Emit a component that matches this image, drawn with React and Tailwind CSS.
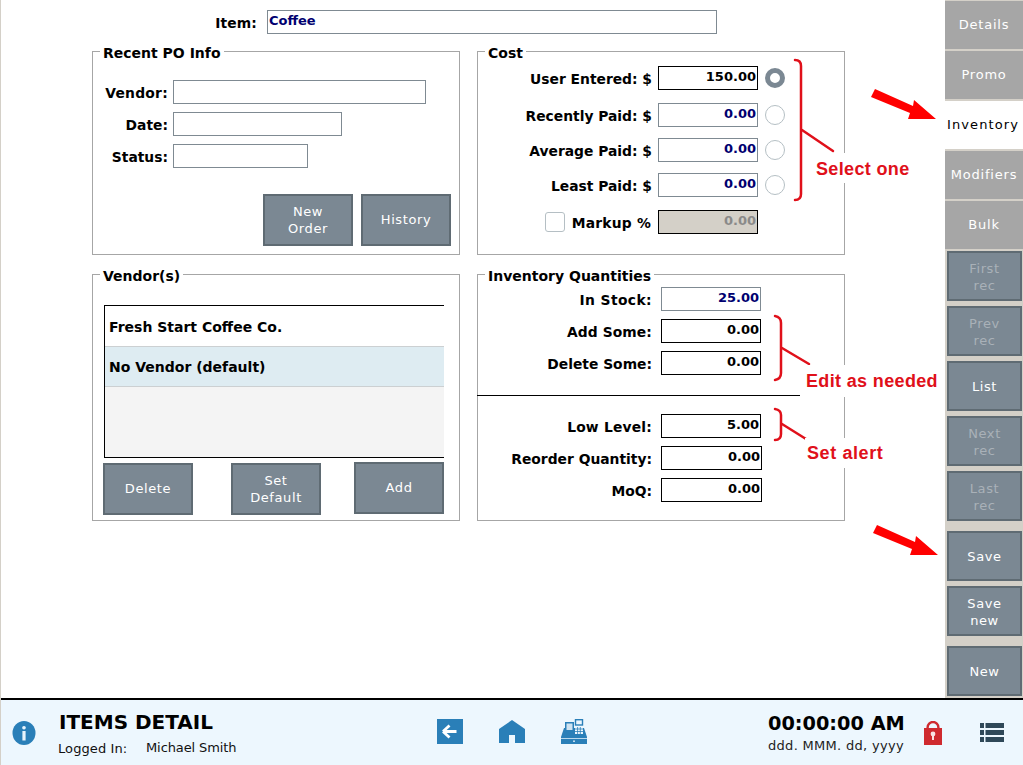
const FONT = "font-['DejaVu_Sans',Verdana,sans-serif]";

function GrayBtn({ children, className = "", dim = false, textClass = "" }) {
  return (
    <div
      className={`flex items-center justify-center text-center bg-[#7b8893] border-2 border-[#5f6b73] text-[13px] leading-[17px] tracking-[0.6px] ${dim ? "text-[#a9b1b8]" : "text-white"} ${className}`}
    >
      <span className={textClass}>{children}</span>
    </div>
  );
}

function Tab({ children, active }) {
  return (
    <div
      className={`h-[48px] mb-[2px] flex items-center justify-center text-[13px] ${active ? "bg-white text-black tracking-[1.1px] pr-[2px]" : "bg-[#a6a6a6] text-white tracking-[0.8px]"}`}
    >
      {children}
    </div>
  );
}

function Panel({ title, className = "", children }) {
  return (
    <div className={`border border-[#a6a6a6] ${className}`}>
      <div className="-mt-[7px] mb-[-9px] ml-[7px] h-[16px] w-fit bg-white px-[3px] text-[14px] leading-[16px] font-bold text-black">
        {title}
      </div>
      {children}
    </div>
  );
}

function Box({ value = "", w = "w-[100px]", navy, dark, disabled }) {
  const border = dark ? "border-black" : "border-[#7f8a92]";
  const color = disabled ? "text-[#8a8a8a] bg-[#d4d0c8]" : navy ? "text-[#000070] bg-white" : "text-black bg-white";
  return (
    <div className={`h-[24px] ${w} border ${border} ${color} text-right pr-[1px] text-[13px] leading-[20px] font-bold`}>
      {value}
    </div>
  );
}

function Radio({ on }) {
  return on ? (
    <div className="w-[20px] h-[20px] rounded-full border-[5px] border-[#7b8893] bg-white" />
  ) : (
    <div className="w-[20px] h-[20px] rounded-full border border-[#b5bfc4] bg-white" />
  );
}

const LABEL = "text-right text-[13.85px] leading-[20px] font-bold pt-[2px]";

function CostRow({ label, value, navy, dark, on, mt }) {
  return (
    <div className={`flex items-center ${mt}`}>
      <div className={`w-[174px] ${LABEL}`}>{label}</div>
      <div className="ml-[6px]"><Box value={value} navy={navy} dark={dark} /></div>
      <div className="ml-[7px]"><Radio on={on} /></div>
    </div>
  );
}

function QtyRow({ label, value, navy, dark, w, mt, ls = "" }) {
  return (
    <div className={`flex items-center ${mt}`}>
      <div className={`w-[174px] ${LABEL} ${ls}`}>{label}</div>
      <div className="ml-[9px]"><Box value={value} navy={navy} dark={dark} w={w} /></div>
    </div>
  );
}

function PoRow({ label, w, mt, ls = "" }) {
  return (
    <div className={`flex items-center ${mt}`}>
      <div className={`w-[75px] ${LABEL} ${ls}`}>{label}</div>
      <div className="ml-[5px]"><Box w={w} /></div>
    </div>
  );
}

function Annotations() {
  const red = "#e0101a";
  const note = "absolute bg-white px-[2px] text-[#e0101a] text-[18px] tracking-[0.35px] font-bold font-['Liberation_Sans',Arial,sans-serif]";
  return (
    <>
      <svg className="absolute left-0 top-0 pointer-events-none" width="1023" height="698" fill="none">
        <g stroke={red} strokeWidth="2.5" strokeLinecap="round">
          <path d="M794 60 q6 0 6 6 v128 q0 6 -6 6" />
          <path d="M801 130 L832 151" />
          <path d="M774 316 q6 1 6 7 v50 q0 6 -6 7" />
          <path d="M781 348 L808 364" />
          <path d="M774 409 q6 1 6 6 v19 q0 6 -6 6" />
          <path d="M781 424 L805 439" />
        </g>
        <polygon fill="#ff0000" points="870,97 874,89 912,106 913,100 935,119 907,119 909,113" />
        <polygon fill="#ff0000" points="872,533 876,525 914,542 915,536 937,555 909,555 911,549" />
      </svg>
      <div className={`${note} left-[813px] top-[153px] h-[30px] leading-[32px]`}>Select one</div>
      <div className={`${note} left-[803px] top-[365px] h-[32px] leading-[32px]`}>Edit as needed</div>
      <div className={`${note} left-[804px] top-[438px] h-[30px] leading-[30px] !tracking-[0.6px]`}>Set alert</div>
    </>
  );
}

function InfoIcon() {
  return (
    <svg width="24" height="24" viewBox="0 0 24 24">
      <ellipse cx="12" cy="12" rx="11.5" ry="12" fill="#2a7fb8" />
      <rect x="10.2" y="5" width="3.6" height="3.4" rx="1.6" fill="#e8f4fc" />
      <rect x="10.4" y="10" width="3.2" height="9.5" fill="#e8f4fc" />
    </svg>
  );
}

function BackIcon() {
  return (
    <svg width="26" height="25" viewBox="0 0 26 25">
      <rect width="26" height="25" fill="#2a7fb8" />
      <path d="M6 12.5 L12.5 6.5 M6 12.5 L12.5 18.5 M6 12.5 H19.5" stroke="#fff" strokeWidth="2.8" fill="none" />
    </svg>
  );
}

function HomeIcon() {
  return (
    <svg width="26" height="23" viewBox="0 0 26 23">
      <path d="M13 0 L26 9 V23 H16 V15 H10 V23 H0 V9 Z" fill="#2a7fb8" />
    </svg>
  );
}

function RegisterIcon() {
  return (
    <svg width="26" height="25" viewBox="0 0 26 25">
      <path d="M3 9 H23 L26 18 V25 H0 V18 Z" fill="#2a7fb8" />
      <rect x="4" y="3" width="9" height="10" fill="#2a7fb8" />
      <rect x="5.5" y="4.5" width="6" height="6.5" fill="#cfe3f1" />
      <rect x="14.5" y="0.7" width="7" height="5.3" fill="#eef7fe" stroke="#2a7fb8" strokeWidth="1.4" />
      <rect x="14" y="8" width="8" height="7" fill="#eef7fe" />
      <path d="M14 10h8M14 12.5h8M16.6 8v7M19.3 8v7" stroke="#2a7fb8" strokeWidth="0.8" />
      <rect x="0" y="19" width="26" height="1" fill="#b9d8ec" />
      <rect x="12" y="21.5" width="2" height="1.4" fill="#cfe3f1" />
    </svg>
  );
}

function LockIcon() {
  return (
    <svg width="18" height="24" viewBox="0 0 18 24">
      <path d="M3.6 8 V6.4 a5.4 5.4 0 0 1 10.8 0 V8" stroke="#cf2a2f" strokeWidth="2.4" fill="none" />
      <rect x="0" y="7" width="18" height="17" fill="#cf2a2f" />
      <circle cx="9" cy="13" r="2.4" fill="#f8e4e4" />
      <rect x="8" y="13" width="2" height="6" fill="#f8e4e4" />
    </svg>
  );
}

function ListIcon() {
  return (
    <svg width="24" height="19" viewBox="0 0 24 19" fill="#2f4858">
      <rect x="0" y="0" width="4" height="5" />
      <rect x="5.5" y="0" width="18.5" height="5" />
      <rect x="0" y="7" width="4" height="5" />
      <rect x="5.5" y="7" width="18.5" height="5" />
      <rect x="0" y="14" width="4" height="5" />
      <rect x="5.5" y="14" width="18.5" height="5" />
    </svg>
  );
}

export default function App() {
  const up = "relative -top-px";
  const down = "relative top-px";
  return (
    <div className={`relative w-[1023px] h-[765px] overflow-hidden bg-white border-l border-[#d4d0c8] text-black ${FONT}`}>
      <div className="flex h-[698px]">
        <div className="w-[944px] pl-[91px]">
          <div className="flex items-center pt-[10px] h-[34px]">
            <div className={`w-[165px] ${LABEL} tracking-[0.15px]`}>Item:</div>
            <div className="ml-[10px] w-[450px] h-[24px] border border-[#7f8a92] pl-[1px] text-[13px] leading-[20px] font-bold text-[#000070]">Coffee</div>
          </div>
          <div className="mt-[17px] grid grid-cols-[368px_368px] gap-x-[17px] gap-y-[19px] grid-rows-[204px_247px]">
            <Panel title="Recent PO Info">
              <PoRow label="Vendor:" w="w-[253px]" mt="mt-[28px]" ls="tracking-[0.25px]" />
              <PoRow label="Date:" w="w-[169px]" mt="mt-[8px]" />
              <PoRow label="Status:" w="w-[135px]" mt="mt-[8px]" />
              <div className="flex justify-end gap-[8px] pr-[8px] mt-[26px]">
                <GrayBtn className="w-[90px] h-[52px]">New<br />Order</GrayBtn>
                <GrayBtn className="w-[90px] h-[52px]" textClass={up}>History</GrayBtn>
              </div>
            </Panel>

            <Panel title="Cost">
              <CostRow label="User Entered: $" value="150.00" dark on mt="mt-[14px]" />
              <CostRow label="Recently Paid: $" value="0.00" navy mt="mt-[13px]" />
              <CostRow label="Average Paid: $" value="0.00" navy mt="mt-[11px]" />
              <CostRow label="Least Paid: $" value="0.00" navy mt="mt-[11px]" />
              <div className="flex items-center mt-[13px]">
                <div className={`w-[174px] flex items-center justify-end gap-[7px] ${LABEL} -ml-px`}>
                  <div className="w-[20px] h-[20px] rounded-[3px] border border-[#b5bfc4] bg-white -mt-[2px]" />
                  <span className="tracking-[0.2px]">Markup %</span>
                </div>
                <div className="ml-[7px]"><Box value="0.00" dark disabled /></div>
              </div>
            </Panel>

            <Panel title="Vendor(s)">
              <div className="mt-[30px] ml-[11px] w-[340px] h-[153px] border-y border-l border-black bg-[#f4f4f4] text-[14px] font-bold">
                <div className="h-[41px] bg-white border-b border-[#ccd0d2] pl-[4px] pt-[2px] flex items-center">Fresh Start Coffee Co.</div>
                <div className="h-[40px] bg-[#deecf2] border-b border-[#ccd0d2] pl-[4px] pt-[1px] flex items-center">No Vendor (default)</div>
              </div>
              <div className="flex items-start mt-[5px] ml-[10px]">
                <GrayBtn className="w-[90px] h-[52px]" textClass={up}>Delete</GrayBtn>
                <GrayBtn className="w-[90px] h-[52px] ml-[38px]">Set<br />Default</GrayBtn>
                <GrayBtn className="w-[90px] h-[52px] ml-[33px] -mt-[1px]" textClass={up}>Add</GrayBtn>
              </div>
            </Panel>

            <Panel title="Inventory Quantities">
              <QtyRow label="In Stock:" value="25.00" navy mt="mt-[12px]" ls="tracking-[0.4px]" />
              <QtyRow label="Add Some:" value="0.00" dark mt="mt-[8px]" ls="tracking-[0.1px]" />
              <QtyRow label="Delete Some:" value="0.00" dark mt="mt-[8px]" />
              <div className="-ml-px mt-[20px] h-px w-[323px] bg-black" />
              <QtyRow label="Low Level:" value="5.00" dark mt="mt-[18px]" ls="tracking-[0.2px]" />
              <QtyRow label="Reorder Quantity:" value="0.00" dark w="w-[101px]" mt="mt-[8px]" />
              <QtyRow label="MoQ:" value="0.00" dark w="w-[101px]" mt="mt-[8px]" />
            </Panel>
          </div>
        </div>

        <div className="w-[78px] bg-[#d4d0c8] pt-[1px]">
          <Tab>Details</Tab>
          <Tab>Promo</Tab>
          <Tab active>Inventory</Tab>
          <Tab>Modifiers</Tab>
          <Tab>Bulk</Tab>
          <div className="ml-[2px] mt-[1px] flex flex-col gap-[5px] w-[75px] [&>*]:h-[50px]">
            <GrayBtn dim textClass={down}>First<br />rec</GrayBtn>
            <GrayBtn dim textClass={down}>Prev<br />rec</GrayBtn>
            <GrayBtn>List</GrayBtn>
            <GrayBtn dim textClass={down}>Next<br />rec</GrayBtn>
            <GrayBtn dim textClass={down}>Last<br />rec</GrayBtn>
            <GrayBtn className="mt-[5px]">Save</GrayBtn>
            <GrayBtn textClass={down}>Save<br />new</GrayBtn>
            <GrayBtn className="mt-[5px]">New</GrayBtn>
          </div>
        </div>
      </div>

      <div className="h-[67px] border-t-2 border-black bg-[#edf7fe] flex items-center">
        <div className="ml-[11px] w-[24px]"><InfoIcon /></div>
        <div className="ml-[23px] w-[378px] pt-[2px]">
          <div className="text-[20px] leading-[22px] font-bold">ITEMS DETAIL</div>
          <div className="mt-[8px] -ml-px flex text-[13px] leading-[16px] text-[#111]">
            <span className="w-[88px] tracking-[0.1px]">Logged In:</span>
            <span className="-mt-px tracking-[-0.1px]">Michael Smith</span>
          </div>
        </div>
        <div className="flex items-center mb-[2px]">
          <BackIcon />
          <div className="ml-[36px]"><HomeIcon /></div>
          <div className="ml-[36px]"><RegisterIcon /></div>
        </div>
        <div className="ml-[181px] w-[156px]">
          <div className="text-[19.3px] leading-[24px] font-bold">00:00:00 AM</div>
          <div className="mt-[2px] text-[13px] leading-[16px] tracking-[0.3px] text-[#222]">ddd. MMM. dd, yyyy</div>
        </div>
        <LockIcon />
        <div className="ml-[38px]"><ListIcon /></div>
      </div>

      <Annotations />
    </div>
  );
}
